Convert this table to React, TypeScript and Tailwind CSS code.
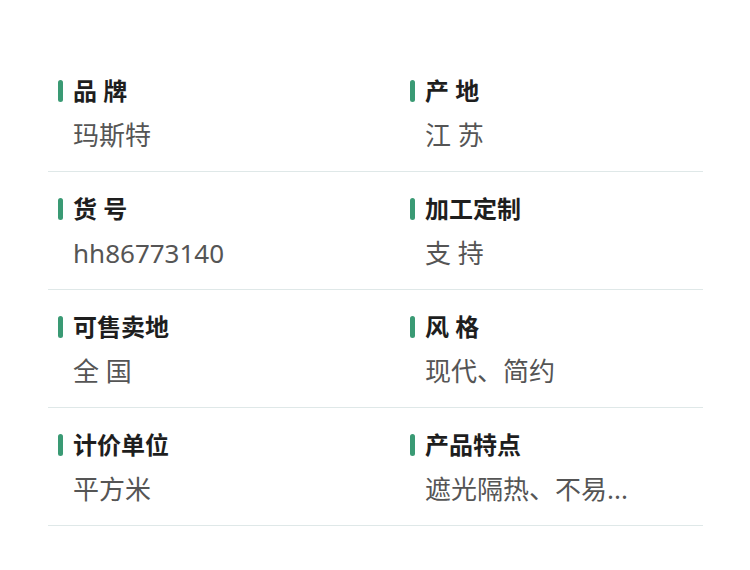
const rows: { label: string; value: string }[][] = [
  [
    { label: "品 牌", value: "玛斯特" },
    { label: "产 地", value: "江 苏" },
  ],
  [
    { label: "货 号", value: "hh86773140" },
    { label: "加工定制", value: "支 持" },
  ],
  [
    { label: "可售卖地", value: "全 国" },
    { label: "风 格", value: "现代、简约" },
  ],
  [
    { label: "计价单位", value: "平方米" },
    { label: "产品特点", value: "遮光隔热、不易..." },
  ],
];

function Cell({ label, value }: { label: string; value: string }) {
  return (
    <div className="pl-[10px]">
      <div className="flex items-center h-[36px]">
        <span className="w-[5px] h-[22px] rounded-full bg-[#3a9a74]" />
        <span className="ml-[10px] text-[24px] font-bold text-[#1e1e1e] leading-[36px]">
          {label}
        </span>
      </div>
      <div className="mt-[8px] pl-[15px] text-[26px] text-[#555555] leading-[36px] whitespace-nowrap">
        {value}
      </div>
    </div>
  );
}

export default function App() {
  return (
    <div
      className="w-[750px] h-[570px] bg-white pt-[54px]"
      style={{ fontFamily: '"Noto Sans", "Noto Sans CJK SC", sans-serif' }}
    >
      <div className="mx-[48px] w-[655px]">
        {rows.map((row, i) => (
          <div
            key={i}
            className="grid grid-cols-[352px_1fr] pt-[19px] pb-[18px] border-b border-[#dfe8e8]"
          >
            {row.map((c) => (
              <Cell key={c.label} label={c.label} value={c.value} />
            ))}
          </div>
        ))}
      </div>
    </div>
  );
}
